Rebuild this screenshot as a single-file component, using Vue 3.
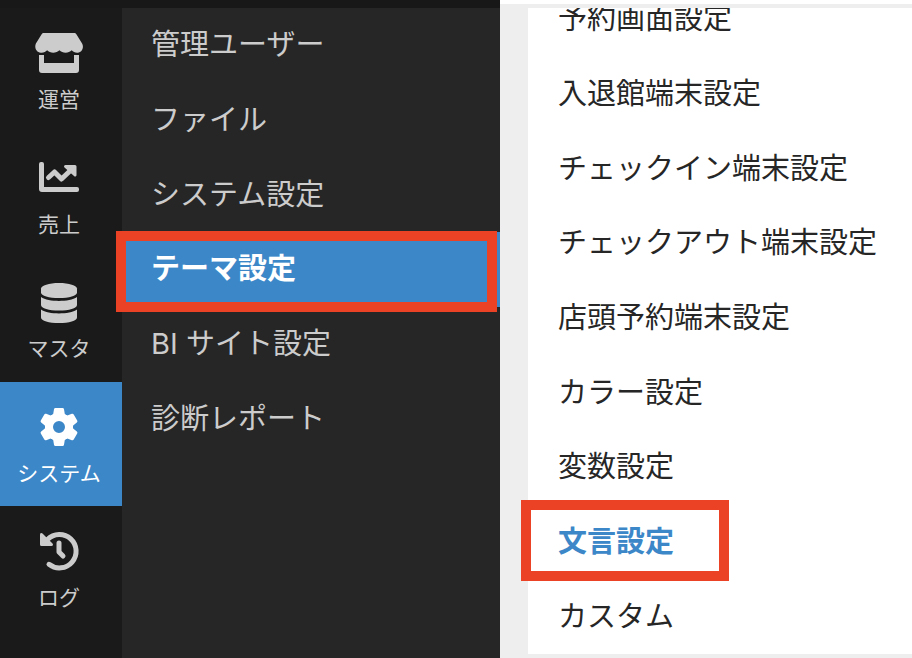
<template>
  <div class="app">
    <header class="topbar">
      <div class="topbar-menu"></div>
      <div class="topbar-main"></div>
    </header>

    <div class="layout">
      <!-- メインメニュー -->
      <nav class="sidebar" aria-label="メインメニュー">
        <ul class="sidebar-list">
          <li v-for="item in mainMenu" :key="item.id">
            <a href="#" class="sidebar-link" :class="{ active: item.id === activeMain }" @click.prevent="activeMain = item.id">
              <svg v-if="item.id === 'shop'" class="icon" viewBox="0 0 48 48" aria-hidden="true">
                <path d="M8.500 4h31a2 2 0 0 1 1.700 1l5.900 9.500c2 3.600.2 8.600-4.300 9.200-2.700.2-4.600-.8-6.100-2.400-3 3.300-9.300 3.200-12.300 0-3 3.200-9.300 3.300-12.300 0C10.500 22.900 8.500 24 5.800 23.700 1 23.100-.8 18.200.9 14.500L6.800 5a2 2 0 0 1 1.700-1z" />
                <path d="M4 26h5v8h30v-8h5v15a3 3 0 0 1-3 3H7a3 3 0 0 1-3-3z" />
              </svg>
              <svg v-else-if="item.id === 'sales'" class="icon" viewBox="0 0 48 48" aria-hidden="true">
                <path d="M6 8h1a2 2 0 0 1 2 2v23h33a2 2 0 0 1 2 2v1a2 2 0 0 1-2 2H7a3 3 0 0 1-3-3V10a2 2 0 0 1 2-2z" />
                <path d="M13.500 23.500l6-5.500 7 7L36 16" class="line" />
                <path d="M30.500 11H40a1.500 1.500 0 0 1 1.500 1.500V21c0 1.500-1.500 2-2.500 1l-9.500-8.500c-1-1-.3-2.500 1-2.500z" />
              </svg>
              <svg v-else-if="item.id === 'master'" class="icon" viewBox="0 0 48 48" aria-hidden="true">
                <path d="M42 10.600v3.800c0 3.100-8 5.600-18 5.600S6 17.500 6 14.400v-3.800C6 7.500 14 5 24 5s18 2.500 18 5.600z" />
                <path d="M42 19v8c0 3.100-8 5.600-18 5.600S6 30.100 6 27v-8c3.800 2.700 10.900 3.900 18 3.900S38.200 21.700 42 19z" />
                <path d="M42 31.500v7.900c0 3.100-8 5.600-18 5.600S6 42.500 6 39.400v-7.900c3.800 2.700 10.900 3.900 18 3.900s14.200-1.200 18-3.900z" />
              </svg>
              <svg v-else-if="item.id === 'system'" class="icon" viewBox="0 0 48 48" aria-hidden="true">
                <circle cx="24" cy="24" r="10" class="gear-ring" />
                <path
                  v-for="angle in gearAngles"
                  :key="angle"
                  d="M20.500 5h7a1.500 1.500 0 0 1 1.500 1.300l.8 4.700 2 2-3.300 4H19.500l-3.300-4 2-2 .8-4.700A1.500 1.500 0 0 1 20.500 5z"
                  :transform="`rotate(${angle} 24 24)`"
                />
              </svg>
              <svg v-else class="icon" viewBox="0 0 48 48" aria-hidden="true">
                <path d="M12.500 12.500A16.700 16.700 0 1 1 14 37.300" class="line" />
                <path d="M5 7.500c0-1.500 1.500-2 2.500-1l10 10c1 1 .3 2.500-1 2.500h-10A1.500 1.500 0 0 1 5 17.500z" />
                <path d="M24 16v9l4 4" class="line" />
              </svg>
              <span>{{ item.label }}</span>
            </a>
          </li>
        </ul>
      </nav>

      <!-- サブメニュー -->
      <nav class="submenu" aria-label="サブメニュー">
        <ul class="submenu-list">
          <li v-for="label in subMenu" :key="label">
            <a href="#" class="submenu-link" :class="{ active: label === activeSub }" @click.prevent="activeSub = label">{{ label }}</a>
          </li>
        </ul>
      </nav>

      <main class="content">
        <ul class="panel">
          <li v-for="label in themeMenu" :key="label">
            <a href="#" class="panel-link" :class="{ active: label === activeTheme }" @click.prevent="activeTheme = label">{{ label }}</a>
          </li>
        </ul>
      </main>
    </div>
  </div>
</template>

<script setup>
import { ref } from 'vue'

const mainMenu = [
  { id: 'shop', label: '運営' },
  { id: 'sales', label: '売上' },
  { id: 'master', label: 'マスタ' },
  { id: 'system', label: 'システム' },
  { id: 'log', label: 'ログ' }
]

const subMenu = [
  '管理ユーザー',
  'ファイル',
  'システム設定',
  'テーマ設定',
  'BI サイト設定',
  '診断レポート'
]

const themeMenu = [
  '予約画面設定',
  '入退館端末設定',
  'チェックイン端末設定',
  'チェックアウト端末設定',
  '店頭予約端末設定',
  'カラー設定',
  '変数設定',
  '文言設定',
  'カスタム'
]

// 歯車アイコンの歯の角度
const gearAngles = [0, 60, 120, 180, 240, 300]

const activeMain = ref('system')
const activeSub = ref('テーマ設定')
const activeTheme = ref('文言設定')
</script>

<style>
body {
  margin: 0;
  background: #eeeeee;
}
</style>

<style scoped>
.app {
  display: flex;
  flex-direction: column;
  height: 100vh;
  font-family: Inter, "Noto Sans CJK JP", sans-serif;
  font-size: 29px;
  line-height: 40px;
}

ul {
  list-style: none;
  margin: 0;
  padding: 0;
}

a {
  text-decoration: none;
  white-space: nowrap;
}

.topbar {
  display: flex;
  flex: none;
  height: 8px;
}

.topbar-menu {
  width: 500px;
  background: #181818;
}

.topbar-main {
  flex: 1;
  box-sizing: border-box;
  background: #ffffff;
  border-bottom: 4px solid #eeeeee;
}

.layout {
  display: flex;
  flex: 1;
  min-height: 0;
}

.sidebar {
  flex: none;
  width: 122px;
  background: #1a1a1a;
}

.sidebar-list {
  display: grid;
  grid-auto-rows: 1fr;
  min-height: 623px;
}

.sidebar-link {
  display: flex;
  flex-direction: column;
  align-items: center;
  box-sizing: border-box;
  height: 100%;
  padding: 21px 4px 0 0;
  gap: 8px;
  color: #cccccc;
  font-size: 21px;
  line-height: 30px;
}

.sidebar-link.active {
  background: #3c87c8;
  color: #ffffff;
}

.icon {
  width: 48px;
  height: 48px;
  fill: currentColor;
}

.icon .line {
  fill: none;
  stroke: currentColor;
  stroke-width: 5;
  stroke-linecap: round;
  stroke-linejoin: round;
}

.icon .gear-ring {
  fill: none;
  stroke: currentColor;
  stroke-width: 8;
}

.submenu {
  flex: none;
  width: 378px;
  background: #262626;
}

.submenu-list {
  display: grid;
  grid-auto-rows: 1fr;
  min-height: 448px;
}

.submenu-link {
  position: relative;
  display: flex;
  align-items: center;
  box-sizing: border-box;
  height: 100%;
  padding-left: 29px;
  color: #cccccc;
}

.submenu-link.active {
  background: #3c87c8;
  color: #ffffff;
  font-weight: 700;
}

/* 選択中の項目を囲む赤枠 */
.submenu-link.active::after,
.panel-link.active::after {
  content: "";
  position: absolute;
  box-sizing: border-box;
  border: 10px solid #eb4226;
  pointer-events: none;
}

.submenu-link.active::after {
  top: -1px;
  right: 3px;
  bottom: -5px;
  left: -6px;
}

/* 一覧は末尾までスクロールした位置で表示 */
.content {
  display: flex;
  flex: 1;
  flex-direction: column;
  justify-content: flex-end;
  min-width: 0;
  padding: 0 0 4px 28px;
  overflow: hidden;
  background: #eeeeee;
}

.panel {
  display: grid;
  flex: none;
  grid-auto-rows: 1fr;
  min-height: 672px;
  background: #ffffff;
}

.panel-link {
  position: relative;
  display: flex;
  align-items: center;
  box-sizing: border-box;
  height: 100%;
  padding-left: 30px;
  color: #262626;
}

.panel-link.active {
  color: #3c87c8;
  font-weight: 700;
}

.panel-link.active::after {
  top: -5px;
  bottom: -2px;
  left: -7px;
  width: 208px;
}
</style>
